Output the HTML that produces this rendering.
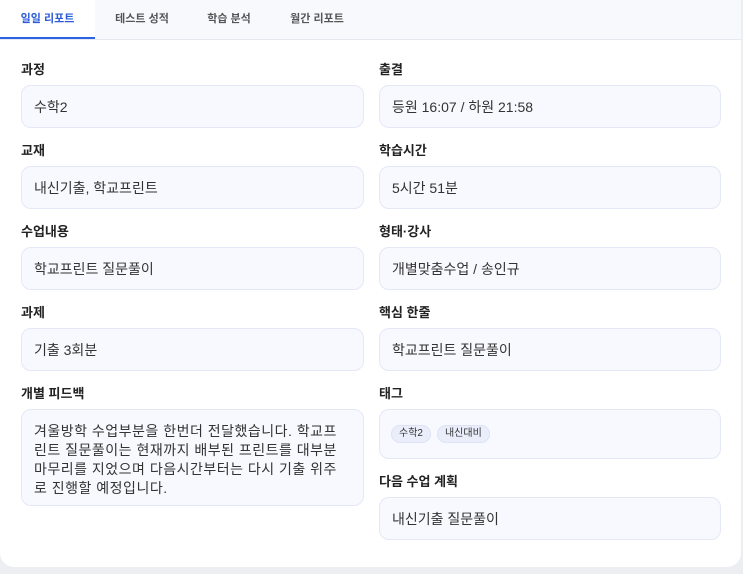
<!DOCTYPE html>
<html><head><meta charset="utf-8"><style>
*{box-sizing:border-box;margin:0;padding:0}
body{width:743px;height:574px;background:#eceef2;font-family:"Liberation Sans","Noto Sans CJK KR",sans-serif;overflow:hidden;position:relative}
.card{position:absolute;left:0;top:0;width:741px;height:567px;background:#fff;border-radius:0 0 14px 14px;}
.tabs{height:40px;background:#f8f9fd;border-bottom:1px solid #e6e9f2;display:flex;}
.tab{font-size:11px;font-weight:bold;color:#555;height:39px;line-height:38px;text-align:center}
.tab.on{color:#2b5bd7;background:#fff;border-bottom:2px solid #2b63e0}
.lbl{position:absolute;font-size:13px;font-weight:bold;color:#222}
.box{position:absolute;background:#f8f9fe;border:1px solid #e4e8f6;border-radius:10px;font-size:14px;color:#333;padding:0 12px;line-height:42px}
.fb{line-height:19px;padding:12px 12px;white-space:nowrap;overflow:hidden;letter-spacing:0.5px}
.tag{display:inline-block;font-size:10px;color:#333;background:#eaeefb;border:1px solid #dde3f5;border-radius:9px;padding:0 7px;line-height:16px;margin-right:6px}
</style></head><body>
<div class="card">
<div class="tabs">
<div class="tab on" style="width:95px">일일 리포트</div>
<div class="tab" style="width:94px">테스트 성적</div>
<div class="tab" style="width:80px">학습 분석</div>
<div class="tab" style="width:96px">월간 리포트</div>
</div>
<div class="lbl" style="left:21px;top:59px">과정</div>
<div class="box" style="left:21px;top:85px;width:343px;height:43px">수학2</div>
<div class="lbl" style="left:21px;top:140px">교재</div>
<div class="box" style="left:21px;top:166px;width:343px;height:43px">내신기출, 학교프린트</div>
<div class="lbl" style="left:21px;top:221px">수업내용</div>
<div class="box" style="left:21px;top:247px;width:343px;height:43px">학교프린트 질문풀이</div>
<div class="lbl" style="left:21px;top:302px">과제</div>
<div class="box" style="left:21px;top:328px;width:343px;height:43px">기출 3회분</div>
<div class="lbl" style="left:21px;top:383px">개별 피드백</div>
<div class="box fb" style="left:21px;top:409px;width:343px;height:97px">겨울방학 수업부분을 한번더 전달했습니다. 학교프<br>린트 질문풀이는 현재까지 배부된 프린트를 대부분<br>마무리를 지었으며 다음시간부터는 다시 기출 위주<br>로 진행할 예정입니다.</div>

<div class="lbl" style="left:379px;top:59px">출결</div>
<div class="box" style="left:379px;top:85px;width:342px;height:43px">등원 16:07 / 하원 21:58</div>
<div class="lbl" style="left:379px;top:140px">학습시간</div>
<div class="box" style="left:379px;top:166px;width:342px;height:43px">5시간 51분</div>
<div class="lbl" style="left:379px;top:221px">형태·강사</div>
<div class="box" style="left:379px;top:247px;width:342px;height:43px">개별맞춤수업 / 송인규</div>
<div class="lbl" style="left:379px;top:302px">핵심 한줄</div>
<div class="box" style="left:379px;top:328px;width:342px;height:43px">학교프린트 질문풀이</div>
<div class="lbl" style="left:379px;top:383px">태그</div>
<div class="box" style="left:379px;top:409px;width:342px;height:50px;padding:13px 11px;line-height:16px"><span class="tag">수학2</span><span class="tag">내신대비</span></div>
<div class="lbl" style="left:379px;top:471px">다음 수업 계획</div>
<div class="box" style="left:379px;top:497px;width:342px;height:43px">내신기출 질문풀이</div>
</div>
</body></html>
